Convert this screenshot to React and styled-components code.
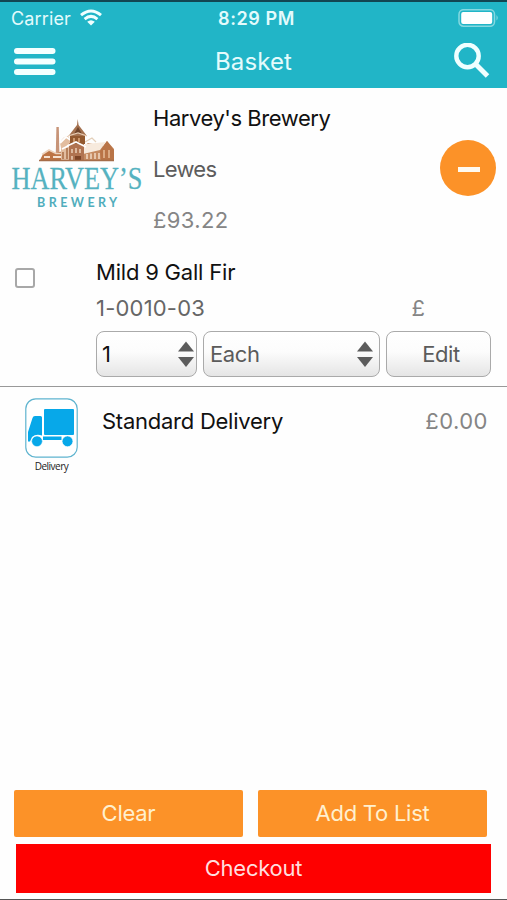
import React from "react";
import styled, { createGlobalStyle } from "styled-components";

const GlobalStyle = createGlobalStyle`
  * {
    box-sizing: border-box;
  }

  body {
    margin: 0;
    background: #fefefe;
    font-family: Inter, "Liberation Sans", sans-serif;
  }

  button {
    font-family: inherit;
    cursor: pointer;
  }
`;

const Screen = styled.div`
  width: 507px;
  height: 900px;
  display: flex;
  flex-direction: column;
  background: #fefefe;
  border-bottom: 1px solid #555;
  overflow: hidden;
`;

const Header = styled.header`
  height: 88px;
  background: #21b5c7;
  border-top: 2px solid #124652;
  color: #e4fbfc;
`;

const StatusBar = styled.div`
  height: 32px;
  display: grid;
  grid-template-columns: 1fr auto 1fr;
  align-items: center;
  padding: 0 7px 0 11px;
`;

const Carrier = styled.div`
  display: flex;
  align-items: center;
  gap: 8px;
  font-size: 18px;
  letter-spacing: 0.15px;
`;

const Clock = styled.div`
  padding-left: 2px;
  font-size: 18px;
  font-weight: 600;
  letter-spacing: 0.6px;
`;

const Battery = styled.svg`
  justify-self: end;
`;

const NavBar = styled.div`
  height: 54px;
  display: grid;
  grid-template-columns: 1fr auto 1fr;
  align-items: center;
  padding: 0 17px 0 14px;
`;

const IconButton = styled.button`
  display: flex;
  padding: 0;
  border: none;
  background: none;
  justify-self: ${(props) => props.$side};
`;

const Title = styled.h1`
  margin: 0;
  padding-left: 3px;
  font-size: 24px;
  font-weight: 400;
  letter-spacing: 0.1px;
`;

const Store = styled.section`
  height: 160px;
  display: flex;
  align-items: center;
  padding: 0 11px 0 8px;
`;

const StoreInfo = styled.div`
  flex: 1;
  display: flex;
  flex-direction: column;
  gap: 23px;
  padding-left: 5px;
  padding-top: 2px;
`;

const Text = styled.div`
  font-size: 22px;
  line-height: 28px;
  white-space: nowrap;
  color: ${(props) => props.$color || "#111"};
  letter-spacing: ${(props) => props.$spacing || "0"};
`;

const RemoveButton = styled.button`
  width: 56px;
  height: 56px;
  display: flex;
  align-items: center;
  justify-content: center;
  padding: 0;
  border: none;
  border-radius: 50%;
  background: #fc9228;
`;

const Minus = styled.span`
  width: 22px;
  height: 5px;
  margin-top: 3px;
  margin-left: 1px;
  background: #fffaf0;
`;

const Item = styled.section`
  height: 139px;
  display: flex;
  padding: 10px 15px 0 14px;
  border-bottom: 1px solid #999;
`;

const Checkbox = styled.input`
  appearance: none;
  width: 20px;
  height: 20px;
  margin: 10px 61px 0 1px;
  border: 2px solid #a8a8a8;
  border-radius: 3px;
  background: #fff;
`;

const ItemBody = styled.div`
  flex: 1;
`;

const ItemMeta = styled.div`
  display: flex;
  justify-content: space-between;
  padding: 8px 67px 0 0;
`;

const Controls = styled.div`
  display: flex;
  gap: 6px;
  margin-top: 9px;
`;

const Control = styled.button`
  width: ${(props) => props.$width};
  height: 46px;
  display: flex;
  align-items: center;
  justify-content: ${(props) => (props.$center ? "center" : "space-between")};
  padding: ${(props) => props.$padding};
  border: 1.5px solid #aaa;
  border-radius: 8px;
  background: linear-gradient(#fff, #fcfcfc 45%, #e5e5e5);
  color: ${(props) => props.$color || "#5b5b5b"};
  font-size: 22px;
  letter-spacing: -0.4px;
`;

const Delivery = styled.section`
  display: flex;
  align-items: flex-start;
  padding: 11px 19px 0 25px;
`;

const DeliveryBadge = styled.div`
  width: 53px;
  margin-right: 24px;
  display: flex;
  flex-direction: column;
  align-items: center;
`;

const DeliveryLabel = styled.span`
  margin-top: 1px;
  font-family: "Open Sans", sans-serif;
  font-size: 10px;
  line-height: 14px;
  letter-spacing: -0.5px;
  color: #222;
`;

const DeliveryLine = styled.div`
  flex: 1;
  display: flex;
  justify-content: space-between;
  padding-top: 9px;
`;

const Footer = styled.footer`
  margin-top: auto;
  padding: 0 16px 6px;
`;

const Actions = styled.div`
  display: grid;
  grid-template-columns: 1fr 1fr;
  gap: 15px;
  margin: 0 4px 7px -2px;
`;

const ActionButton = styled.button`
  height: 47px;
  padding: 0 0 2px;
  border: none;
  border-radius: 2px;
  background: #fc9228;
  color: #fff0cf;
  font-size: 22px;
  letter-spacing: -0.25px;
`;

const CheckoutButton = styled(ActionButton)`
  display: block;
  width: 100%;
  height: 49px;
  border-radius: 0;
  background: #fe0000;
  color: #ffdede;
`;

const Wifi = () => (
  <svg width="24" height="18" viewBox="0 0 24 18" fill="none" stroke="#f0ffff" strokeWidth="3">
    <path d="M2 6.2 Q12 -2.2 22 6.2" />
    <path d="M5.6 10.1 Q12 4.7 18.4 10.1" />
    <path d="M12 16.5 L8.2 12.8 Q12 9.6 15.8 12.8 Z" fill="#f0ffff" stroke="none" />
  </svg>
);

const BatteryIcon = () => (
  <Battery width="42" height="19" viewBox="0 0 42 19">
    <rect x="1" y="0.7" width="35.5" height="16.5" rx="4.5" fill="none" stroke="#86d9e1" strokeWidth="1.5" />
    <rect x="3.2" y="2.9" width="31" height="12" rx="2" fill="#fff" />
    <path d="M38.5 6 Q41 8.8 38.5 11.5 Z" fill="#86d9e1" />
  </Battery>
);

const MenuIcon = () => (
  <svg width="42" height="28" viewBox="0 0 42 28" fill="#f4ffff">
    <rect x="0" y="1" width="41.5" height="6" rx="3" />
    <rect x="0" y="11.5" width="41.5" height="6" rx="3" />
    <rect x="0" y="22" width="41.5" height="6" rx="3" />
  </svg>
);

const SearchIcon = () => (
  <svg width="36" height="36" viewBox="0 0 36 36" fill="none" stroke="#f0ffff">
    <circle cx="13.5" cy="13" r="11.2" strokeWidth="4.4" />
    <path d="M22 21.5 L33.5 33" strokeWidth="5" />
  </svg>
);

const Stepper = () => (
  <svg width="18" height="27" viewBox="0 0 18 27" fill="#5c5c5c">
    <path d="M1 10.5 L9 0.5 L17 10.5 Z" />
    <path d="M1 16 L17 16 L9 26 Z" />
  </svg>
);

const BreweryLogo = () => (
  <svg width="140" height="100" viewBox="0 2 140 100">
    {/* chimney */}
    <path d="M48.4 11 h2.4 l.6 26 h-3.6 Z" fill="#c79478" />
    {/* left wing */}
    <path d="M32 44 L35 38 L41 34.5 L48 37 L55 35 V44 Z" fill="#bd7445" />
    <path d="M34 38.5 L41 34 L48 37.5 H55" fill="none" stroke="#ecd2bd" strokeWidth="1.6" />
    <path d="M36 41 H42 M45 41 H53" stroke="#f6e2d2" strokeWidth="1.8" />
    <path d="M52 27 Q55 20 60 20 L65 27 V44 H53 V32 Z" fill="#e2bd9f" />
    <path d="M52 27 L58 21 L64 25 M54 33 L64 28" fill="none" stroke="#fff" strokeWidth="1.8" />
    <path d="M55 36 V43 M59 32 V43 M63 31 V43" stroke="#a5683f" strokeWidth="1.4" />
    {/* right wing */}
    <path d="M72 44 V33 L80 27 L95 30 L99 25 L106 33 V44 Z" fill="#c58a60" />
    <path d="M72 35 L78 28 L98 26 L92 34 L75 38 Z" fill="#f7eadd" />
    <path d="M92 35 L99 25 L106 34 V44 H93 Z" fill="#b97447" />
    <path d="M96 34 V42 M101 34 V42" stroke="#e6bc98" strokeWidth="1.5" />
    <path d="M79 38 V43 M83 37.5 V43 M87 37 V43 M91 37 V43" stroke="#f1dac5" strokeWidth="1.5" />
    <path d="M77 26 L84 22 L88 26" fill="none" stroke="#e3cfb9" strokeWidth="1.2" />
    {/* tower */}
    <path d="M61 27 H76 V44 H61 Z" fill="#b07350" />
    <path d="M62 19 H77 V28 H62 Z" fill="#93592f" />
    <path d="M69.7 3 L70.6 9 L79 20 H60.5 L69 9 Z" fill="#a4714f" />
    <path d="M66 18 L70 11 L74 18 Z" fill="#70452b" />
    <path d="M60 20 L70 17 L79 20" fill="none" stroke="#e9cdb4" strokeWidth="1.2" />
    <path d="M66 22 V26 M71 22 V26" stroke="#dba77c" strokeWidth="1.6" />
    <path d="M59 30 L68 26 L78 31" fill="none" stroke="#fff" strokeWidth="1.6" />
    <path d="M64 33 V37 M68 32 V37 M72 33 V37 M64 40 V44" stroke="#f0d6bf" strokeWidth="1.4" />
    <path d="M67 44 V40 H73 V44" fill="#7d4426" />
    <path d="M31 44.5 H106" stroke="#a56c49" strokeWidth="1.3" />
    <text
      transform="translate(3.5 73) scale(0.835 1)"
      fill="#55b2c0"
      stroke="#55b2c0"
      strokeWidth="0.25"
      fontFamily="Liberation Serif, serif"
      fontSize="31.5"
    >
      HARVEY’S
    </text>
    <text
      x="29"
      y="90.5"
      fill="#50adbc"
      fontFamily="Lato, sans-serif"
      fontSize="12.5"
      fontWeight="700"
      letterSpacing="3.45"
    >
      BREWERY
    </text>
  </svg>
);

const TruckIcon = () => (
  <svg width="53" height="60" viewBox="0 0 53 60">
    <rect x="0.8" y="0.8" width="51.4" height="58.4" rx="10" fill="#fff" stroke="#5fb4cf" strokeWidth="1.2" />
    <rect x="19" y="11" width="30" height="26" rx="1" fill="#07a8e9" />
    <path d="M10 18 H15.5 Q17 18 17 19.5 V37.5 Q11 35.5 7 39 L5 43.5 H3 V34 L7.5 20 Q8 18 10 18 Z" fill="#07a8e9" />
    <rect x="18" y="38.5" width="18.5" height="3.5" fill="#07a8e9" />
    <circle cx="12" cy="43.3" r="5.4" fill="#07a8e9" stroke="#fff" strokeWidth="0.6" />
    <circle cx="42.5" cy="43.3" r="5.4" fill="#07a8e9" stroke="#fff" strokeWidth="0.6" />
  </svg>
);

const App = () => {
  return (
    <>
      <GlobalStyle />
      <Screen>
        <Header>
          <StatusBar>
            <Carrier>
              Carrier
              <Wifi />
            </Carrier>
            <Clock>8:29 PM</Clock>
            <BatteryIcon />
          </StatusBar>
          <NavBar>
            <IconButton $side="start" aria-label="Menu">
              <MenuIcon />
            </IconButton>
            <Title>Basket</Title>
            <IconButton $side="end" aria-label="Search">
              <SearchIcon />
            </IconButton>
          </NavBar>
        </Header>

        <Store>
          <BreweryLogo />
          <StoreInfo>
            <Text $spacing="-0.45px">Harvey's Brewery</Text>
            <Text $color="#5c5c5c" $spacing="-0.7px">
              Lewes
            </Text>
            <Text $color="#858585" $spacing="0.35px">
              £93.22
            </Text>
          </StoreInfo>
          <RemoveButton aria-label="Remove">
            <Minus />
          </RemoveButton>
        </Store>

        <Item>
          <Checkbox type="checkbox" />
          <ItemBody>
            <Text $spacing="-0.2px">Mild 9 Gall Fir</Text>
            <ItemMeta>
              <Text $color="#666" $spacing="0.2px">
                1-0010-03
              </Text>
              <Text $color="#858585">£</Text>
            </ItemMeta>
            <Controls>
              <Control $width="101px" $padding="0 1px 0 5px" $color="#111">
                1
                <Stepper />
              </Control>
              <Control $width="177px" $padding="0 5px 0 6px">
                Each
                <Stepper />
              </Control>
              <Control $width="105px" $padding="0 0 0 5px" $center>
                Edit
              </Control>
            </Controls>
          </ItemBody>
        </Item>

        <Delivery>
          <DeliveryBadge>
            <TruckIcon />
            <DeliveryLabel>Delivery</DeliveryLabel>
          </DeliveryBadge>
          <DeliveryLine>
            <Text $spacing="-0.25px">Standard Delivery</Text>
            <Text $color="#858585" $spacing="0.5px">
              £0.00
            </Text>
          </DeliveryLine>
        </Delivery>

        <Footer>
          <Actions>
            <ActionButton>Clear</ActionButton>
            <ActionButton>Add To List</ActionButton>
          </Actions>
          <CheckoutButton>Checkout</CheckoutButton>
        </Footer>
      </Screen>
    </>
  );
};

export default App;
